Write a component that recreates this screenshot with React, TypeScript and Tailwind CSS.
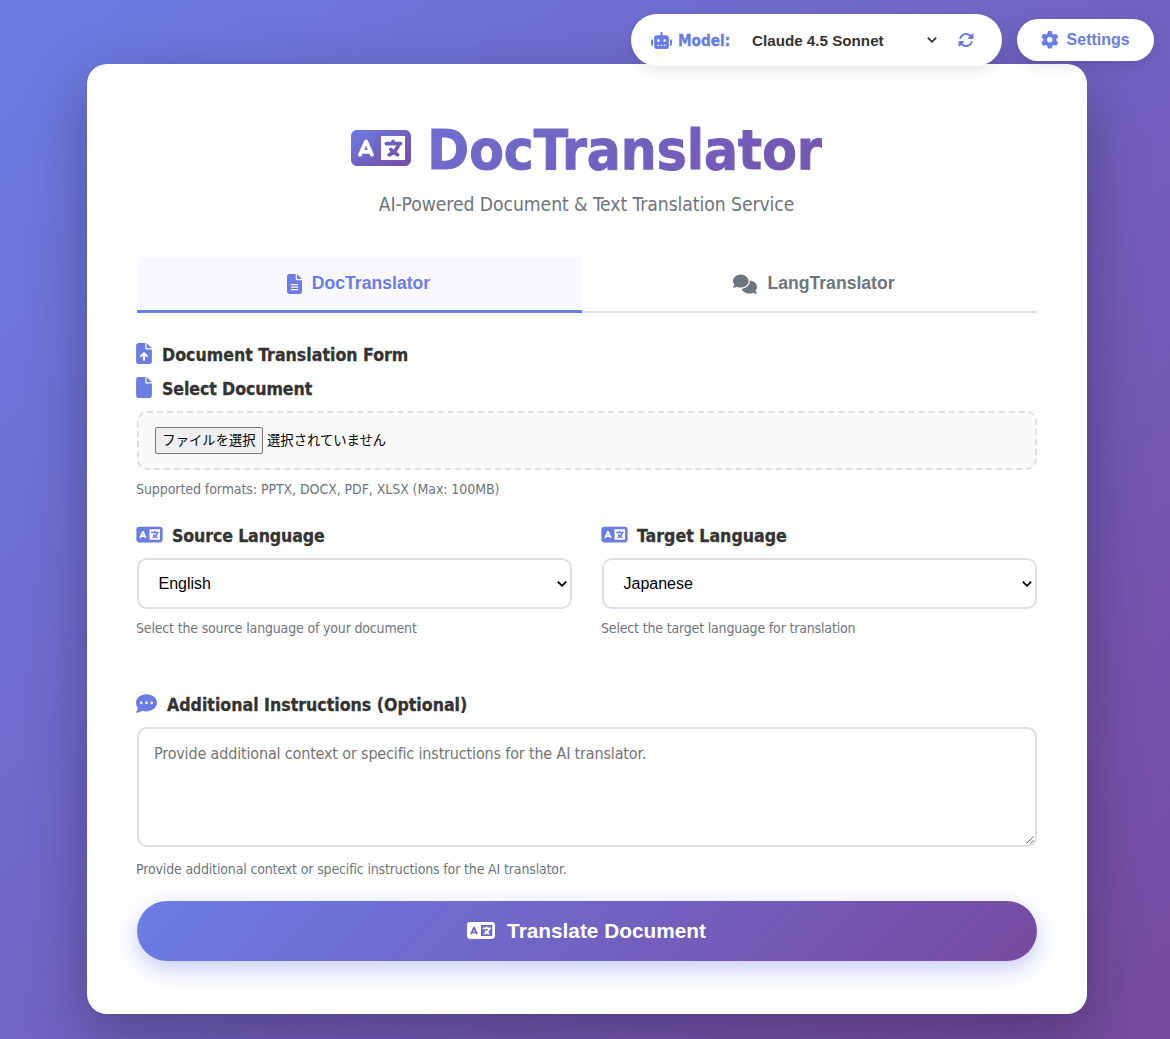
import React from "react";
import { FaGear, FaRotate, FaLanguage, FaFileLines, FaComments, FaFileArrowUp, FaFile, FaCommentDots } from "react-icons/fa6";

function RobotIcon({ className }: { className?: string }) {
  return (
    <svg viewBox="0 0 640 512" className={className} fill="currentColor">
      <path d="M320 0c17.7 0 32 14.3 32 32V96H472c39.8 0 72 32.2 72 72V440c0 39.8-32.2 72-72 72H168c-39.8 0-72-32.2-72-72V168c0-39.8 32.2-72 72-72H288V32c0-17.7 14.3-32 32-32zM208 384c-8.8 0-16 7.2-16 16s7.2 16 16 16h32c8.8 0 16-7.2 16-16s-7.2-16-16-16H208zm96 0c-8.8 0-16 7.2-16 16s7.2 16 16 16h32c8.8 0 16-7.2 16-16s-7.2-16-16-16H304zm96 0c-8.8 0-16 7.2-16 16s7.2 16 16 16h32c8.8 0 16-7.2 16-16s-7.2-16-16-16H400zM264 256a40 40 0 1 0 -80 0 40 40 0 1 0 80 0zm152 40a40 40 0 1 0 0-80 40 40 0 1 0 0 80zM48 224H64V416H48c-26.5 0-48-21.5-48-48V272c0-26.5 21.5-48 48-48zm544 0c26.5 0 48 21.5 48 48v96c0 26.5-21.5 48-48 48H576V224h16z" />
    </svg>
  );
}

function Chevron({ className }: { className?: string }) {
  return (
    <svg viewBox="0 0 10 6" className={`h-[6px] w-[10px] ${className ?? ""}`} fill="none" stroke="currentColor" strokeWidth="1.8">
      <path d="M0.8 0.7 L5 4.8 L9.2 0.7" />
    </svg>
  );
}

function FieldLabel({ icon, children, className }: { icon: React.ReactNode; children: React.ReactNode; className?: string }) {
  return (
    <div className="flex h-[22px] items-center text-[17.6px] font-bold text-[#333]">
      <span className="mr-[10px] flex pb-[2px] text-[#6b7ce4]">{icon}</span>
      <span className={`pt-[2px] whitespace-nowrap [-webkit-text-stroke:0.3px_#333] ${className ?? ""}`}>{children}</span>
    </div>
  );
}

function LanguageField({ label, value, hint, labelClass }: { label: string; value: string; hint: string; labelClass: string }) {
  return (
    <div className="w-[435px]">
      <FieldLabel icon={<FaLanguage className="-mr-px -ml-px h-[21px] w-[27px]" />} className={labelClass}>{label}</FieldLabel>
      <div className="mt-3 flex h-[51px] items-center justify-between rounded-[10px] border-2 border-[#dfdfdf] bg-white pr-[3px] pl-[19.5px] font-['Liberation_Sans',sans-serif] text-base text-black">
        <span>{value}</span>
        <Chevron />
      </div>
      <div className="mt-[9px] -ml-px h-5 text-[14px] leading-5 tracking-[-0.17px] whitespace-nowrap text-[#6e757d]">{hint}</div>
    </div>
  );
}

export default function App() {
  return (
    <div className="relative h-[1039px] overflow-hidden bg-[linear-gradient(135deg,#6c7ce5_0%,#764a9f_100%)] pt-16 pl-[87px] font-['DejaVu_Sans_Condensed','Noto_Sans',sans-serif]">
      <svg className="absolute h-0 w-0" aria-hidden="true">
        <defs>
          <linearGradient id="brand" x1="0" y1="0" x2="1" y2="1">
            <stop offset="0" stopColor="#6c7ce5" />
            <stop offset="1" stopColor="#764a9f" />
          </linearGradient>
        </defs>
      </svg>

      <div className="absolute top-[14px] right-4 z-10 flex items-center gap-[15px]">
        <div className="flex h-[52px] w-[371px] items-center rounded-full bg-white pl-5 text-[#6b7ce4] shadow-[0_4px_15px_rgba(0,0,0,0.1)]">
          <RobotIcon className="h-[17px] w-[21px]" />
          <span className="ml-[6px] w-[52px] pt-[2px] text-[15.2px] font-bold whitespace-nowrap [-webkit-text-stroke:0.3px_#6b7ce4]">Model:</span>
          <span className="ml-[22px] pt-[2px] font-['Liberation_Sans',sans-serif] text-[15.2px] font-bold whitespace-nowrap text-[#333]">Claude 4.5 Sonnet</span>
          <Chevron className="ml-auto text-[#333]" />
          <FaRotate className="mr-7 ml-[21px] h-4 w-4" />
        </div>
        <div className="flex h-[42px] w-[137px] items-center rounded-full bg-white pl-6 font-['Liberation_Sans',sans-serif] text-base font-bold text-[#6b7ce4] shadow-[0_4px_15px_rgba(0,0,0,0.1)]">
          <FaGear className="h-[17.6px] w-[17.6px]" />
          <span className="ml-2">Settings</span>
        </div>
      </div>

      <main className="h-[950px] w-[1000px] rounded-[20px] bg-white px-[50px] pt-[50px] shadow-[0_20px_60px_rgba(0,0,0,0.3)]">
        <div className="flex h-[68px] items-center justify-center">
          <FaLanguage fill="url(#brand)" className="h-12 w-[60px]" />
          <h1 className="ml-4 bg-[linear-gradient(135deg,#6c7ce5_0%,#764a9f_100%)] bg-[length:900px_72px] bg-[position:-291px_0px] bg-clip-text pt-[4px] pr-px text-[56px] leading-[68px] font-bold tracking-[0.02px] whitespace-nowrap text-transparent [-webkit-text-stroke:1px_transparent]">DocTranslator</h1>
        </div>
        <p className="mt-[10px] h-[26px] pr-px text-center text-[19.2px] leading-[26px] tracking-[-0.07px] text-[#6e757d]">AI-Powered Document &amp; Text Translation Service</p>

        <div className="mt-[39px] flex h-[56px] border-b-2 border-[#dfdfdf] font-['Liberation_Sans',sans-serif] text-[17.6px] font-bold">
          <div className="-mb-0.5 flex w-[445px] items-center justify-center border-b-[3px] border-[#6b7ce4] bg-[#f9f8ff] pr-[2px] text-[#6b7ce4]">
            <FaFileLines className="mr-[10px] h-5 w-[15px]" />
            DocTranslator
          </div>
          <div className="flex flex-1 items-center justify-center pb-px pl-[9px] text-[#6e757d]">
            <FaComments className="mr-[10px] h-5 w-[24px]" />
            LangTranslator
          </div>
        </div>

        <div className="mt-[30px] flex flex-col gap-3">
          <FieldLabel icon={<FaFileArrowUp className="-ml-px h-[21px] w-4" />}>Document Translation Form</FieldLabel>
          <FieldLabel icon={<FaFile className="-ml-px h-[21px] w-4" />} className="tracking-[-0.09px]">Select Document</FieldLabel>
        </div>

        <div className="mt-3 flex h-[59px] items-center rounded-[10px] border-2 border-dashed border-[#dfdfdf] bg-[#fafafa] pl-4 font-['Noto_Sans_CJK_JP',sans-serif] text-[13.33px] text-black">
          <span className="flex h-[27px] w-[108px] items-center justify-center rounded-[2px] border border-[#767676] bg-[#efefef] pb-[2px] whitespace-nowrap">ファイルを選択</span>
          <span className="ml-1 pb-[2px] whitespace-nowrap">選択されていません</span>
        </div>
        <div className="mt-[9px] -ml-px h-5 text-[14px] leading-5 tracking-[-0.075px] whitespace-nowrap text-[#6e757d]">Supported formats: PPTX, DOCX, PDF, XLSX (Max: 100MB)</div>

        <div className="mt-[25px] flex justify-between">
          <LanguageField label="Source Language" value="English" hint="Select the source language of your document" labelClass="tracking-[-0.12px]" />
          <LanguageField label="Target Language" value="Japanese" hint="Select the target language for translation" labelClass="tracking-[0.02px]" />
        </div>

        <div className="mt-[55px]">
          <FieldLabel icon={<FaCommentDots className="-ml-px h-[21px] w-[21px]" />}>Additional Instructions (Optional)</FieldLabel>
        </div>
        <div className="relative mt-3 h-[120px] rounded-[10px] border-2 border-[#dfdfdf] bg-white pt-[15px] pl-[15px] text-base leading-5 tracking-[-0.165px] whitespace-nowrap text-[#757575]">
          Provide additional context or specific instructions for the AI translator.
          <svg viewBox="0 0 10 10" className="absolute right-0 bottom-0 h-[10px] w-[10px]" stroke="#666" strokeWidth="1" fill="none">
            <path d="M1.5 8.5 L8.5 1.5 M5.5 8.5 L8.5 5.5" />
          </svg>
        </div>
        <div className="mt-3 -ml-px h-5 text-[14px] leading-5 tracking-[-0.145px] whitespace-nowrap text-[#6e757d]">Provide additional context or specific instructions for the AI translator.</div>

        <div className="mt-[22px] flex h-[60px] items-center justify-center rounded-full bg-[linear-gradient(135deg,#6c7ce5_0%,#764a9f_100%)] pr-px font-['Liberation_Sans',sans-serif] text-[20.8px] font-bold text-white shadow-[0_8px_25px_rgba(107,124,228,0.4)]">
          <FaLanguage className="mr-3 mb-px h-[23px] w-7" />
          Translate Document
        </div>
      </main>
    </div>
  );
}
